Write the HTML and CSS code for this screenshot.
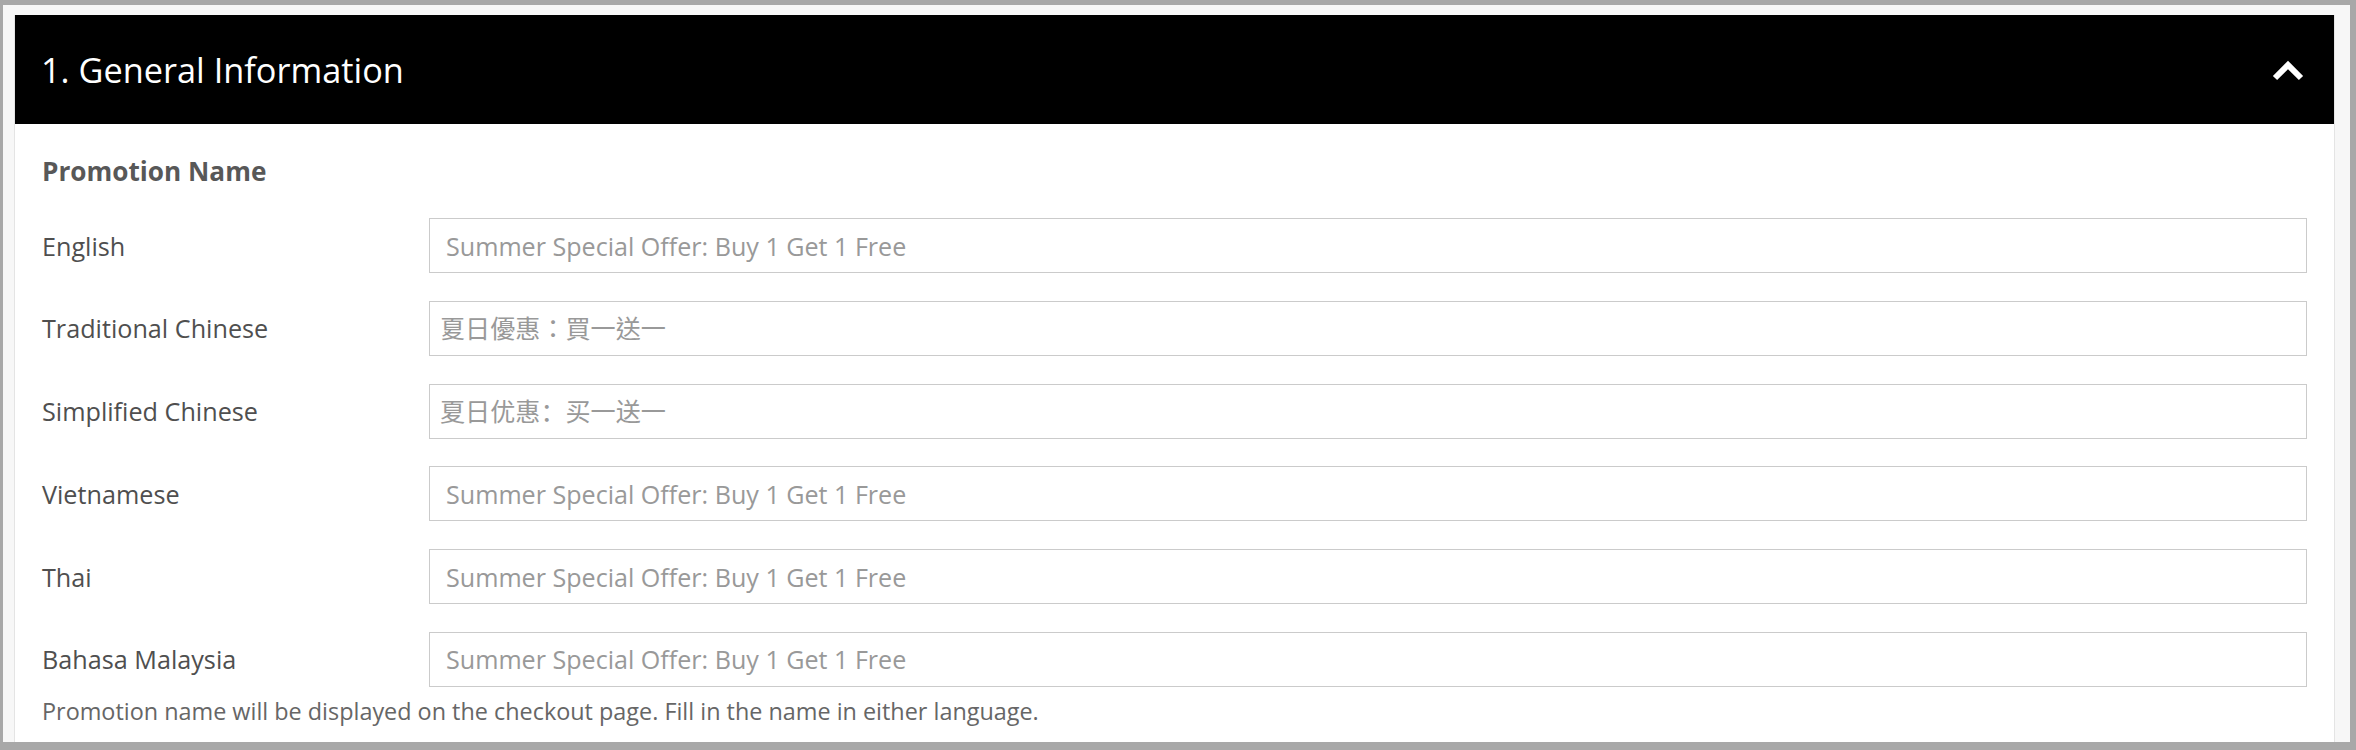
FILE: index.html
```html
<!DOCTYPE html>
<html lang="en">
<head>
<meta charset="utf-8">
<title>General Information</title>
<link rel="stylesheet" href="styles.css">
</head>
<body>
<div class="frame">
  <section class="panel">
    <header class="panel-header">
      <h2 class="panel-title">1. General Information</h2>
      <button class="panel-toggle" type="button" aria-label="Collapse">
        <svg class="chevron" width="34" height="24" viewBox="0 0 34 24" aria-hidden="true">
          <polyline points="3,18 16,5 29,18" fill="none" stroke="#fff" stroke-width="6" stroke-linejoin="miter" stroke-linecap="butt"/>
        </svg>
      </button>
    </header>
    <div class="panel-body">
      <h3 class="group-title">Promotion Name</h3>
      <div class="field-list">
        <div class="field">
          <label class="field-label" for="name-en">English</label>
          <input class="field-input" id="name-en" type="text" placeholder="Summer Special Offer: Buy 1 Get 1 Free">
        </div>
        <div class="field">
          <label class="field-label" for="name-tc">Traditional Chinese</label>
          <input class="field-input field-input--cjk" id="name-tc" type="text" lang="zh-Hant" placeholder="夏日優惠：買一送一">
        </div>
        <div class="field">
          <label class="field-label" for="name-sc">Simplified Chinese</label>
          <input class="field-input field-input--cjk" id="name-sc" type="text" lang="zh-Hans" placeholder="夏日优惠：买一送一">
        </div>
        <div class="field">
          <label class="field-label" for="name-vi">Vietnamese</label>
          <input class="field-input" id="name-vi" type="text" placeholder="Summer Special Offer: Buy 1 Get 1 Free">
        </div>
        <div class="field">
          <label class="field-label" for="name-th">Thai</label>
          <input class="field-input" id="name-th" type="text" placeholder="Summer Special Offer: Buy 1 Get 1 Free">
        </div>
        <div class="field">
          <label class="field-label" for="name-ms">Bahasa Malaysia</label>
          <input class="field-input" id="name-ms" type="text" placeholder="Summer Special Offer: Buy 1 Get 1 Free">
        </div>
      </div>
      <p class="hint">Promotion name will be displayed on the checkout page. Fill in the name in either language.</p>
    </div>
  </section>
</div>
</body>
</html>
```

FILE: styles.css
```css
* {
  box-sizing: border-box;
}

html,
body {
  margin: 0;
  padding: 0;
}

body {
  background: #a8a8a8;
  font-family: "Open Sans", "Noto Sans CJK TC", sans-serif;
  height: 750px;
  overflow: hidden;
}

.frame {
  margin: 5px 6px 0 3px;
  padding: 10px 15px 0 11px;
  height: 737px;
  background: #f7f7f7;
  overflow: hidden;
}

.panel {
  background: #fff;
  border: 1px solid #e4e4e4;
  border-top: none;
}

.panel-header {
  height: 109px;
  background: #000;
  display: flex;
  align-items: center;
  justify-content: space-between;
  padding: 0 28px 0 26px;
}

.panel-title {
  margin: 0;
  color: #fff;
  font-size: 34.3px;
  font-weight: 400;
  line-height: 1.2;
}

.panel-toggle {
  border: 0;
  padding: 0;
  margin: 5px 0 0 0;
  background: transparent;
  display: flex;
  cursor: pointer;
}

.chevron {
  display: block;
}

.panel-body {
  padding: 29px 27px 20px 27px;
}

.group-title {
  margin: 0;
  font-size: 26.2px;
  font-weight: 700;
  line-height: 36px;
  color: #585858;
}

.field-list {
  margin-top: 29px;
  display: flex;
  flex-direction: column;
  gap: 27.8px;
}

.field {
  display: grid;
  grid-template-columns: 387px 1fr;
  align-items: center;
}

.field-label {
  font-size: 25.2px;
  color: #4f4f4f;
  line-height: normal;
}

.field-input {
  height: 55px;
  width: 100%;
  border: 1px solid #cbcbcb;
  border-radius: 0;
  padding: 0 16px;
  font-family: "Open Sans", "Noto Sans CJK TC", sans-serif;
  font-size: 25.1px;
  color: #333;
  background: #fff;
  outline: none;
}

.field-input::placeholder {
  color: #999;
  opacity: 1;
}

.field-input--cjk {
  padding-left: 10px;
}

.hint {
  margin: 8px 0 0 0;
  font-size: 23.4px;
  line-height: normal;
  color: #666;
}
```
